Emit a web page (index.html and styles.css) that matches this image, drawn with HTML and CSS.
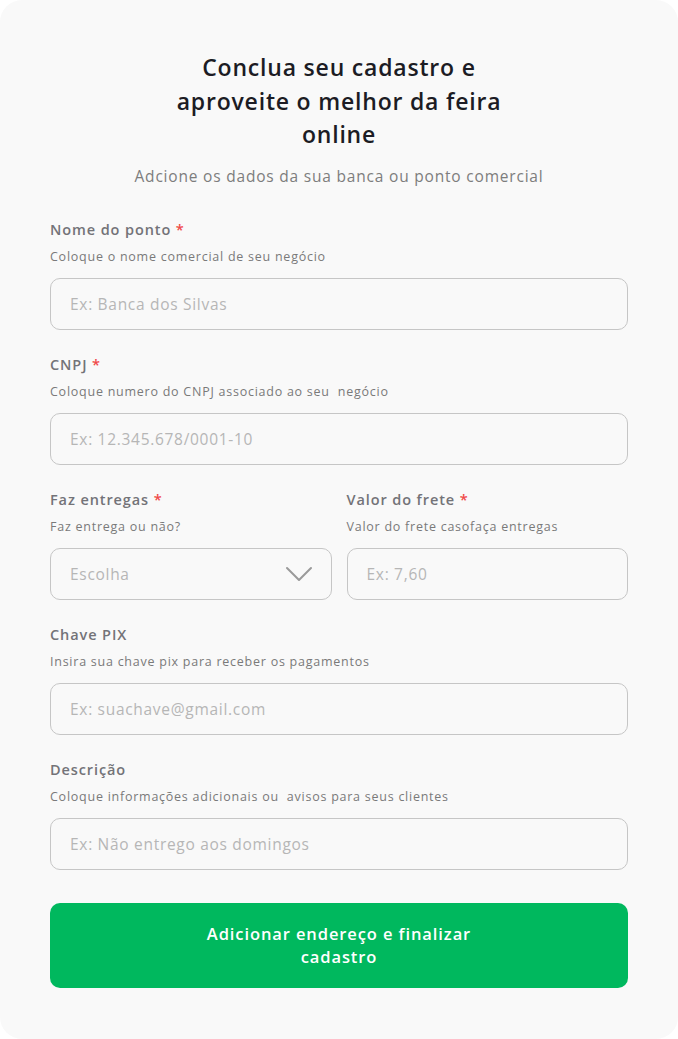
FILE: index.html
```html
<!DOCTYPE html>
<html lang="pt-BR">
<head>
<meta charset="utf-8">
<title>Conclua seu cadastro</title>
<link rel="stylesheet" href="styles.css">
</head>
<body>
<main class="card">
  <h1 class="title">Conclua seu cadastro e aproveite o melhor da feira online</h1>
  <p class="subtitle">Adcione os dados da sua banca ou ponto comercial</p>

  <div class="field">
    <div class="label">Nome do ponto <span class="req">*</span></div>
    <div class="hint">Coloque o nome comercial de seu negócio</div>
    <div class="input">Ex: Banca dos Silvas</div>
  </div>

  <div class="field">
    <div class="label">CNPJ <span class="req">*</span></div>
    <div class="hint">Coloque numero do CNPJ associado ao seu&nbsp; negócio</div>
    <div class="input">Ex: 12.345.678/0001-10</div>
  </div>

  <div class="row">
    <div class="field">
      <div class="label">Faz entregas <span class="req">*</span></div>
      <div class="hint">Faz entrega ou não?</div>
      <div class="input select">
        <span>Escolha</span>
        <svg class="chev" width="28" height="16" viewBox="0 0 28 16"><path d="M2 2 L14 14 L26 2" fill="none" stroke="#9a9a9a" stroke-width="2" stroke-linecap="round" stroke-linejoin="round"/></svg>
      </div>
    </div>
    <div class="field">
      <div class="label">Valor do frete <span class="req">*</span></div>
      <div class="hint">Valor do frete casofaça entregas</div>
      <div class="input">Ex: 7,60</div>
    </div>
  </div>

  <div class="field">
    <div class="label">Chave PIX</div>
    <div class="hint">Insira sua chave pix para receber os pagamentos</div>
    <div class="input">Ex: suachave@gmail.com</div>
  </div>

  <div class="field">
    <div class="label">Descrição</div>
    <div class="hint">Coloque informações adicionais ou&nbsp; avisos para seus clientes</div>
    <div class="input">Ex: Não entrego aos domingos</div>
  </div>

  <button class="submit">Adicionar endereço e finalizar<br>cadastro</button>
</main>
</body>
</html>
```

FILE: styles.css
```css
* { box-sizing: border-box; }
html, body { margin: 0; padding: 0; background: #ffffff; }
body { font-family: "Open Sans", "Noto Sans", sans-serif; }

.card {
  width: 678px;
  height: 1039px;
  background: #f9f9f9;
  border-radius: 22px;
  padding: 51px 50px 0 50px;
  display: flex;
  flex-direction: column;
}

.title {
  margin: 0 auto;
  width: 360px;
  text-align: center;
  font-size: 23px;
  line-height: 33.5px;
  font-weight: 600;
  letter-spacing: 0.8px;
  color: #1c1c24;
}

.subtitle {
  margin: 13px 0 0 0;
  text-align: center;
  font-size: 15.5px;
  line-height: 22px;
  color: #7d7d7d;
  font-weight: 500;
  letter-spacing: 0.8px;
}

.field {
  display: flex;
  flex-direction: column;
  margin-top: 25px;
}
.subtitle + .field { margin-top: 33px; }

.row {
  display: flex;
  gap: 15px;
}
.row .field { flex: 1; margin-top: 25px; }

.label {
  font-size: 14.5px;
  line-height: 20px;
  font-weight: 600;
  letter-spacing: 0.9px;
  color: #737378;
}
.req { color: #f04848; }

.hint {
  margin-top: 8px;
  font-size: 12.5px;
  line-height: 18px;
  letter-spacing: 0.75px;
  color: #7a7a7a;
}

.input {
  margin-top: 12px;
  height: 52px;
  border: 1px solid #c6c6c6;
  border-radius: 10px;
  padding: 0 19px;
  display: flex;
  align-items: center;
  font-size: 15.5px;
  letter-spacing: 0.7px;
  color: #b6b6b6;
}

.select { justify-content: space-between; padding-right: 18px; }
.chev { display: block; }

.submit {
  margin-top: 33px;
  height: 85px;
  border: none;
  border-radius: 10px;
  background: #00b85e;
  color: #ffffff;
  font-family: "Open Sans", "Noto Sans", sans-serif;
  font-size: 16.5px;
  line-height: 23px;
  font-weight: 600;
  letter-spacing: 0.9px;
}
```
